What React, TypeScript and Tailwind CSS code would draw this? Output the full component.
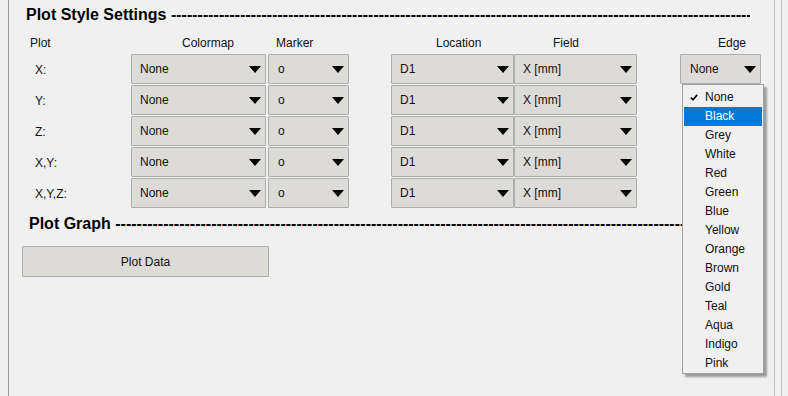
import React from 'react';

const rows = ['X:', 'Y:', 'Z:', 'X,Y:', 'X,Y,Z:'];
const edgeOptions = ['None', 'Black', 'Grey', 'White', 'Red', 'Green', 'Blue', 'Yellow', 'Orange', 'Brown', 'Gold', 'Teal', 'Aqua', 'Indigo', 'Pink'];
const dashes = '-'.repeat(160);

function Arrow() {
  return (
    <svg width="12" height="7" viewBox="0 0 12 7" className="shrink-0">
      <polygon points="0,0 12,0 6,7" fill="#000" />
    </svg>
  );
}

/** Qt-style combobox button */
function Combo({ value, width, pl = 'pl-[8px]' }: { value: string; width: string; pl?: string }) {
  return (
    <div className={`${width} h-[30px] shrink-0 flex items-center justify-between ${pl} pr-[4px] bg-[#dddbd7] border border-[#adadad] rounded-[1px]`}>
      <span className="leading-none">{value}</span>
      <Arrow />
    </div>
  );
}

function SectionTitle({ text, pl, width }: { text: string; pl: string; width: string }) {
  return (
    <div className={`${pl} h-[18px] ${width} overflow-hidden whitespace-nowrap text-[16px] leading-[18px] font-bold text-black`}>
      {text} {dashes}
    </div>
  );
}

export default function App() {
  return (
    <div className="relative w-[788px] h-[396px] overflow-hidden bg-[#f0f0f0] text-[12px] text-[#111]" style={{ fontFamily: '"Liberation Sans", Arial, sans-serif' }}>
      <div className="flex h-full">
        <div className="w-[8px] shrink-0" />
        {/* main panel */}
        <div className="w-[767px] shrink-0 h-full border-l border-[#9a9a9a] border-r border-r-[#c4c4c4] pt-[6px]">
          <SectionTitle text="Plot Style Settings" pl="pl-[17px]" width="w-[741px]" />

          {/* column headers */}
          <div className="flex mt-[12px] h-[14px] leading-[14px] pl-[21px]">
            <span className="w-[152px] shrink-0">Plot</span>
            <span className="w-[94px] shrink-0">Colormap</span>
            <span className="w-[160px] shrink-0">Marker</span>
            <span className="w-[117px] shrink-0">Location</span>
            <span className="w-[165px] shrink-0">Field</span>
            <span className="shrink-0">Edge</span>
          </div>

          {/* combobox rows */}
          <div className="flex flex-col gap-[1px] mt-[4px]">
            {rows.map((label, i) => (
              <div key={label} className="flex items-center h-[30px]">
                <span className="w-[122px] shrink-0 pl-[26px] pt-[1px]">{label}</span>
                <Combo value="None" width="w-[135px]" />
                <div className="w-[2px] shrink-0" />
                <Combo value="o" width="w-[81px]" pl="pl-[9px]" />
                <div className="w-[42px] shrink-0" />
                <Combo value="D1" width="w-[123px]" />
                <Combo value="X [mm]" width="w-[123px]" />
                {i === 0 && (
                  <>
                    <div className="w-[43px] shrink-0" />
                    <Combo value="None" width="w-[81px]" pl="pl-[9px]" />
                  </>
                )}
              </div>
            ))}
          </div>

          <div className="mt-[7px]">
            <SectionTitle text="Plot Graph" pl="pl-[20px]" width="w-[680px]" />
          </div>

          <div className="pl-[13px] mt-[13px]">
            <button className="w-[247px] h-[31px] flex items-center justify-center bg-[#dddbd7] border border-[#adadad] rounded-[1px] text-[12px] text-[#111]">
              Plot Data
            </button>
          </div>
        </div>
        <div className="w-[6px] shrink-0" />
        <div className="w-[1px] h-full shrink-0 bg-[#c4c4c4]" />
      </div>

      {/* open Edge dropdown */}
      <div className="absolute left-[682px] top-[84px] w-[82px] h-[290px] bg-[#f0f0f0] border border-[#a0a0a0] px-[1px] pt-[3px] shadow-[3px_3px_2px_rgba(0,0,0,0.35)]">
        {edgeOptions.map((opt, i) => (
          <div
            key={opt}
            className={`relative h-[19px] leading-[19px] pl-[21px] ${i === 1 ? 'bg-[#0078d7] text-white' : 'text-[#111]'}`}
          >
            {i === 0 && (
              <svg width="8" height="7" viewBox="0 0 8 7" className="absolute left-[6px] top-[6px]">
                <polyline points="0.8,3.6 3,5.8 7.2,0.8" fill="none" stroke="#000" strokeWidth="1.6" />
              </svg>
            )}
            {opt}
          </div>
        ))}
      </div>
    </div>
  );
}
